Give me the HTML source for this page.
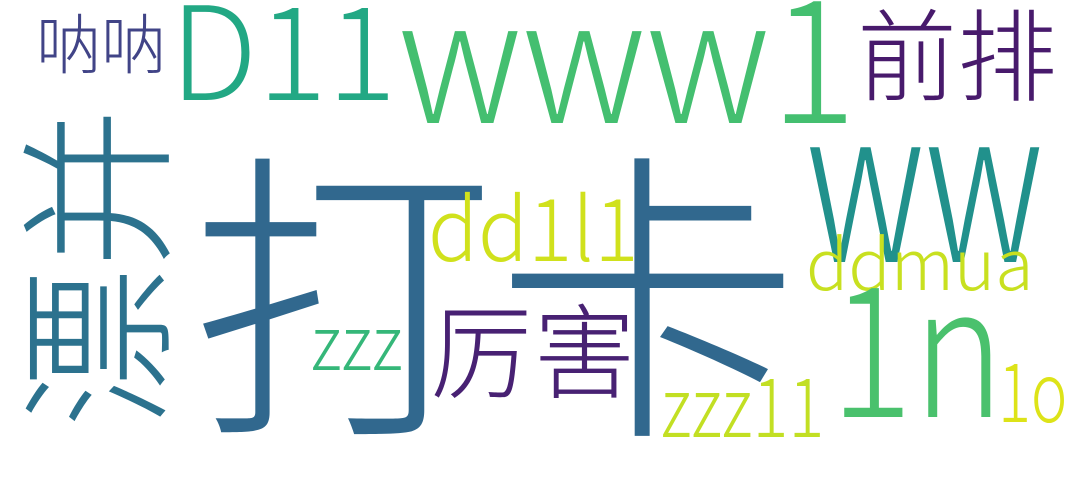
<!DOCTYPE html>
<html><head><meta charset="utf-8"><style>
html,body{margin:0;padding:0;background:#fff;}
body{width:1080px;height:463px;position:relative;overflow:hidden;font-family:"Noto Sans CJK SC","Liberation Sans",sans-serif;font-weight:300;}
span{position:absolute;line-height:1;white-space:nowrap;transform-origin:0 0;}
</style></head><body>
<span style="left:36px;top:8px;font-size:65px;color:#414487">呐呐</span>
<span style="left:170px;top:-21px;font-size:130px;color:#22a884">D11</span>
<span style="left:398px;top:-38px;font-size:172px;color:#44bf70;transform:scaleX(0.94)">www1</span>
<span style="left:857px;top:0px;font-size:100px;color:#481a6c">前排</span>
<span style="left:806px;top:61px;font-size:215px;color:#21918c;transform:scaleX(0.72)">ww</span>
<span style="left:190px;top:128px;font-size:305px;color:#31688e">打卡</span>
<span style="left:428px;top:181px;font-size:87px;color:#d0e11c;transform:scaleX(0.95)">dd1l1</span>
<span style="left:806px;top:226px;font-size:70px;color:#c8e020">ddmua</span>
<span style="left:830px;top:248px;font-size:182px;color:#4ac16d;transform:scaleX(0.85)">1n</span>
<span style="left:430px;top:294px;font-size:103px;color:#482173">厉害</span>
<span style="left:311px;top:300px;font-size:75px;color:#35b779;transform:scaleX(0.9)">zzz</span>
<span style="left:661px;top:361px;font-size:82px;color:#c2df23;transform:scaleX(0.82)">zzz11</span>
<span style="left:998px;top:346px;font-size:82px;color:#dde318;transform:scaleX(0.75)">1o</span>
<span style="left:-72px;top:188px;width:320px;height:160px;font-size:160px;color:#2c728e;transform:rotate(-90deg);transform-origin:160px 80px">漂并</span>
</body></html>
